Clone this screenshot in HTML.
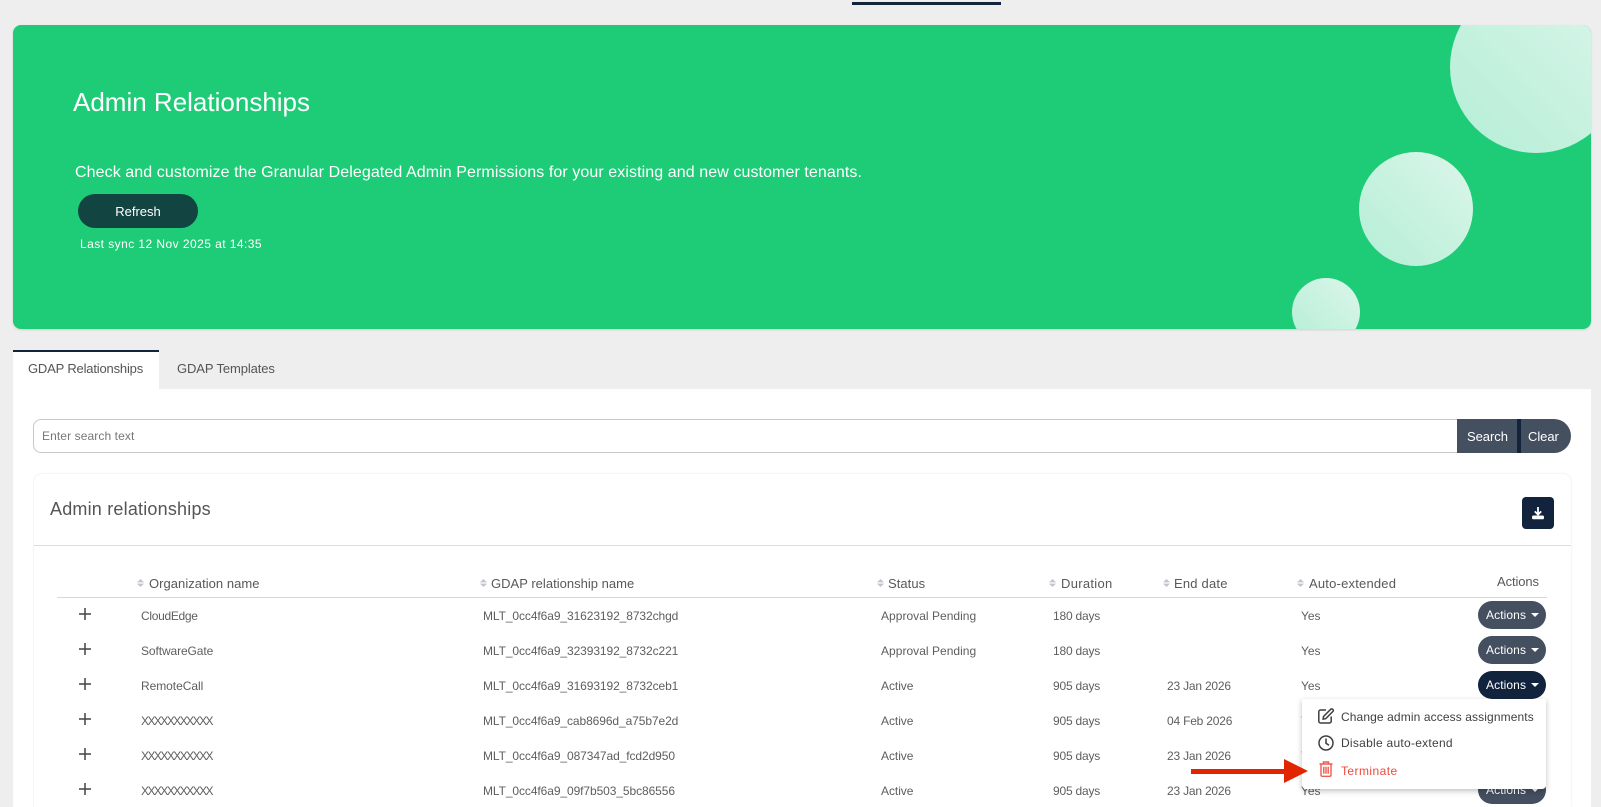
<!DOCTYPE html>
<html><head><meta charset="utf-8"><style>
html,body{margin:0;padding:0;height:807px;overflow:hidden}
body{width:1601px;background:#eee;position:relative;font-family:"Liberation Sans",sans-serif;color:#5e5e5e}
.a{position:absolute;box-sizing:border-box}
.t{position:absolute;white-space:nowrap;line-height:20px;font-size:12px;letter-spacing:-.05px}
.r{margin-top:1px}
.h{font-size:13px;color:#595959;margin-top:1px}
.s{position:absolute;width:7px;height:8px}
.p{position:absolute;width:12px;height:12px}
.l{letter-spacing:-.09px}
.x{letter-spacing:-1.55px}
.d{letter-spacing:-.2px}
.b{position:absolute;left:1478px;width:68px;height:28px;border-radius:14px;background:#444f60;color:#fff;font-size:12px;line-height:29px;padding-left:8px;box-sizing:border-box;letter-spacing:.1px}
.b i{position:absolute;left:53px;top:12px;border:4px solid transparent;border-top-color:#fff;border-bottom:0}
.c{position:absolute;border-radius:50%;background:linear-gradient(45deg,#b4eed6,#dcf6ea)}
.m{font-size:12px;color:#3f3f3f}
</style></head><body>
<div class="a" style="left:852px;top:2px;width:149px;height:3px;background:#12233d"></div>

<div class="a" style="left:13px;top:25px;width:1578px;height:304px;background:#1ecc77;border-radius:8px;overflow:hidden;box-shadow:0 1px 2px rgba(0,0,0,.12)">
<div class="c" style="left:1437px;top:-44px;width:172px;height:172px"></div>
<div class="c" style="left:1346px;top:127px;width:114px;height:114px"></div>
<div class="c" style="left:1279px;top:253px;width:68px;height:68px"></div>
</div>
<div class="t" style="left:73px;top:87px;line-height:30px;font-size:26px;color:#fff;letter-spacing:0">Admin Relationships</div>
<div class="t" style="left:75px;top:163px;font-size:16px;color:#fff;letter-spacing:.085px">Check and customize the Granular Delegated Admin Permissions for your existing and new customer tenants.</div>
<div class="a" style="left:78px;top:194px;width:120px;height:34px;border-radius:17px;background:#124442;color:#fff;font-size:13px;line-height:35px;text-align:center">Refresh</div>
<div class="t" style="left:80px;top:234px;color:#fff;letter-spacing:.44px">Last sync 12 Nov 2025 at 14:35</div>

<div class="a" style="left:13px;top:389px;width:1578px;height:418px;background:#fff"></div>
<div class="a" style="left:13px;top:350px;width:146px;height:39px;background:#fff;border-top:2px solid #12233d"></div>
<div class="t" style="left:28px;top:359px;font-size:13px;color:#555;letter-spacing:-.18px">GDAP Relationships</div>
<div class="t" style="left:177px;top:359px;font-size:13px;color:#555;letter-spacing:-.1px">GDAP Templates</div>

<div class="a" style="left:33px;top:419px;width:1425px;height:34px;border:1px solid #c9c9c9;border-right:0;border-radius:8px 0 0 8px;background:#fff"></div>
<div class="t" style="left:42px;top:426px;color:#777;letter-spacing:.1px">Enter search text</div>
<div class="a" style="left:1457px;top:419px;width:114px;height:34px;background:#444f60;border-radius:0 17px 17px 0"></div>
<div class="a" style="left:1517px;top:419px;width:4px;height:34px;background:#12233d"></div>
<div class="t" style="left:1467px;top:427px;font-size:13px;color:#fff">Search</div>
<div class="t" style="left:1528px;top:427px;font-size:13px;color:#fff">Clear</div>

<div class="a" style="left:34px;top:474px;width:1537px;height:333px;background:#fff;border-radius:8px 8px 0 0;box-shadow:0 0 2px rgba(0,0,0,.12)"></div>
<div class="a" style="left:34px;top:545px;width:1537px;height:1px;background:#dcdcdc"></div>
<div class="t" style="left:50px;top:499px;font-size:18px;color:#555;letter-spacing:.2px">Admin relationships</div>
<div class="a" style="left:1522px;top:497px;width:32px;height:32px;border-radius:4px;background:#12233d"></div>
<svg class="a" style="left:1529px;top:504px" width="18" height="18" viewBox="0 0 18 18"><path d="M9 3v7M5.800 7.400 9 10.600l3.200-3.200" fill="none" stroke="#fff" stroke-width="1.800"/><rect x="3" y="11.500" width="12" height="3.800" rx="1.600" fill="#fff"/></svg>

<div class="a" style="left:57px;top:597px;width:1490px;height:1px;background:#d8d8d8"></div>

<svg width="0" height="0" style="position:absolute"><defs>
<g id="so"><path d="M3.500 0 7 3.400H0z" fill="#cdbcd2"/><path d="M3.500 8 7 4.600H0z" fill="#c3c3cc"/></g>
<g id="pl"><path d="M6 0v12M0 6h12" stroke="#444" stroke-width="1.500"/></g>
</defs></svg>
<svg class="s" style="left:137px;top:579px"><use href="#so"/></svg>
<div class="t h" style="left:149px;top:573px;letter-spacing:.04px">Organization name</div>
<svg class="s" style="left:480px;top:579px"><use href="#so"/></svg>
<div class="t h" style="left:491px;top:573px;letter-spacing:.02px">GDAP relationship name</div>
<svg class="s" style="left:877px;top:579px"><use href="#so"/></svg>
<div class="t h" style="left:888px;top:573px;letter-spacing:.05px">Status</div>
<svg class="s" style="left:1049px;top:579px"><use href="#so"/></svg>
<div class="t h" style="left:1061px;top:573px;letter-spacing:.3px">Duration</div>
<svg class="s" style="left:1163px;top:579px"><use href="#so"/></svg>
<div class="t h" style="left:1174px;top:573px;letter-spacing:.2px">End date</div>
<svg class="s" style="left:1297px;top:579px"><use href="#so"/></svg>
<div class="t h" style="left:1309px;top:573px;letter-spacing:.2px">Auto-extended</div>
<div class="t h" style="left:1497px;top:571px;letter-spacing:-.1px">Actions</div>

<svg class="p" style="left:79px;top:608px"><use href="#pl"/></svg>
<div class="t r" style="left:141px;top:605px;letter-spacing:-.3px">CloudEdge</div>
<div class="t r l" style="left:483px;top:605px">MLT_0cc4f6a9_31623192_8732chgd</div>
<div class="t r" style="left:881px;top:605px;letter-spacing:.03px">Approval Pending</div>
<div class="t r d" style="left:1053px;top:605px">180 days</div>
<div class="t r" style="left:1301px;top:605px">Yes</div>
<div class="b" style="top:601px">Actions<i></i></div>

<svg class="p" style="left:79px;top:643px"><use href="#pl"/></svg>
<div class="t r" style="left:141px;top:640px;letter-spacing:-.1px">SoftwareGate</div>
<div class="t r l" style="left:483px;top:640px">MLT_0cc4f6a9_32393192_8732c221</div>
<div class="t r" style="left:881px;top:640px;letter-spacing:.03px">Approval Pending</div>
<div class="t r d" style="left:1053px;top:640px">180 days</div>
<div class="t r" style="left:1301px;top:640px">Yes</div>
<div class="b" style="top:636px">Actions<i></i></div>

<svg class="p" style="left:79px;top:678px"><use href="#pl"/></svg>
<div class="t r" style="left:141px;top:675px">RemoteCall</div>
<div class="t r l" style="left:483px;top:675px">MLT_0cc4f6a9_31693192_8732ceb1</div>
<div class="t r" style="left:881px;top:675px">Active</div>
<div class="t r d" style="left:1053px;top:675px">905 days</div>
<div class="t r d" style="left:1167px;top:675px">23 Jan 2026</div>
<div class="t r" style="left:1301px;top:675px">Yes</div>
<div class="b" style="top:671px;background:#12233d">Actions<i></i></div>

<svg class="p" style="left:79px;top:713px"><use href="#pl"/></svg>
<div class="t r x" style="left:141px;top:710px">XXXXXXXXXXX</div>
<div class="t r l" style="left:483px;top:710px">MLT_0cc4f6a9_cab8696d_a75b7e2d</div>
<div class="t r" style="left:881px;top:710px">Active</div>
<div class="t r d" style="left:1053px;top:710px">905 days</div>
<div class="t r d" style="left:1167px;top:710px">04 Feb 2026</div>
<div class="t r" style="left:1301px;top:710px">Yes</div>

<svg class="p" style="left:79px;top:748px"><use href="#pl"/></svg>
<div class="t r x" style="left:141px;top:745px">XXXXXXXXXXX</div>
<div class="t r l" style="left:483px;top:745px">MLT_0cc4f6a9_087347ad_fcd2d950</div>
<div class="t r" style="left:881px;top:745px">Active</div>
<div class="t r d" style="left:1053px;top:745px">905 days</div>
<div class="t r d" style="left:1167px;top:745px">23 Jan 2026</div>
<div class="t r" style="left:1301px;top:745px">Yes</div>

<svg class="p" style="left:79px;top:783px"><use href="#pl"/></svg>
<div class="t r x" style="left:141px;top:780px">XXXXXXXXXXX</div>
<div class="t r l" style="left:483px;top:780px">MLT_0cc4f6a9_09f7b503_5bc86556</div>
<div class="t r" style="left:881px;top:780px">Active</div>
<div class="t r d" style="left:1053px;top:780px">905 days</div>
<div class="t r d" style="left:1167px;top:780px">23 Jan 2026</div>
<div class="t r" style="left:1301px;top:780px">Yes</div>
<div class="b" style="top:776px">Actions<i></i></div>

<div class="a" style="left:1302px;top:699px;width:244px;height:90px;background:#fff;box-shadow:0 2px 6px rgba(0,0,0,.25);border-radius:0 0 4px 4px"></div>
<svg class="a" style="left:1317px;top:707px" width="18" height="18" viewBox="0 0 18 18" fill="none" stroke="#3f3f3f" stroke-width="1.500"><path d="M9 3H3.500A1.700 1.700 0 0 0 1.800 4.700V14.300A1.700 1.700 0 0 0 3.500 16H12.500A1.700 1.700 0 0 0 14.200 14.300V9.500"/><path d="M6.500 9.500 13.800 2.200a1.200 1.200 0 0 1 1.700 0l.5.500a1.200 1.200 0 0 1 0 1.700L8.700 11.700l-2.600.4z"/></svg>
<svg class="a" style="left:1317px;top:734px" width="18" height="18" viewBox="0 0 18 18" fill="none" stroke="#3f3f3f" stroke-width="1.500"><circle cx="9" cy="9" r="7"/><path d="M9 4.500V9.300l3 2"/></svg>
<svg class="a" style="left:1319px;top:761px" width="14" height="16" viewBox="0 0 14 16" fill="none" stroke="#ef5a4e" stroke-width="1.400"><path d="M.5 3H13.500M4.500 3V1h5v2M2 3V14a1.300 1.300 0 0 0 1.300 1.300h7.400A1.300 1.300 0 0 0 12 14V3M4.800 5.800v7M7 5.800v7M9.200 5.800v7"/></svg>
<div class="t m" style="left:1341px;top:707px;letter-spacing:.11px">Change admin access assignments</div>
<div class="t m" style="left:1341px;top:733px;letter-spacing:.27px">Disable auto-extend</div>
<div class="t m" style="left:1341px;top:761px;color:#ef4a3d;letter-spacing:.43px">Terminate</div>

<svg class="a" style="left:1191px;top:759px" width="118" height="25" viewBox="0 0 118 25"><path d="M0 10H93V0L117 12 93 24V15H0z" fill="#e32400"/></svg>
</body></html>
